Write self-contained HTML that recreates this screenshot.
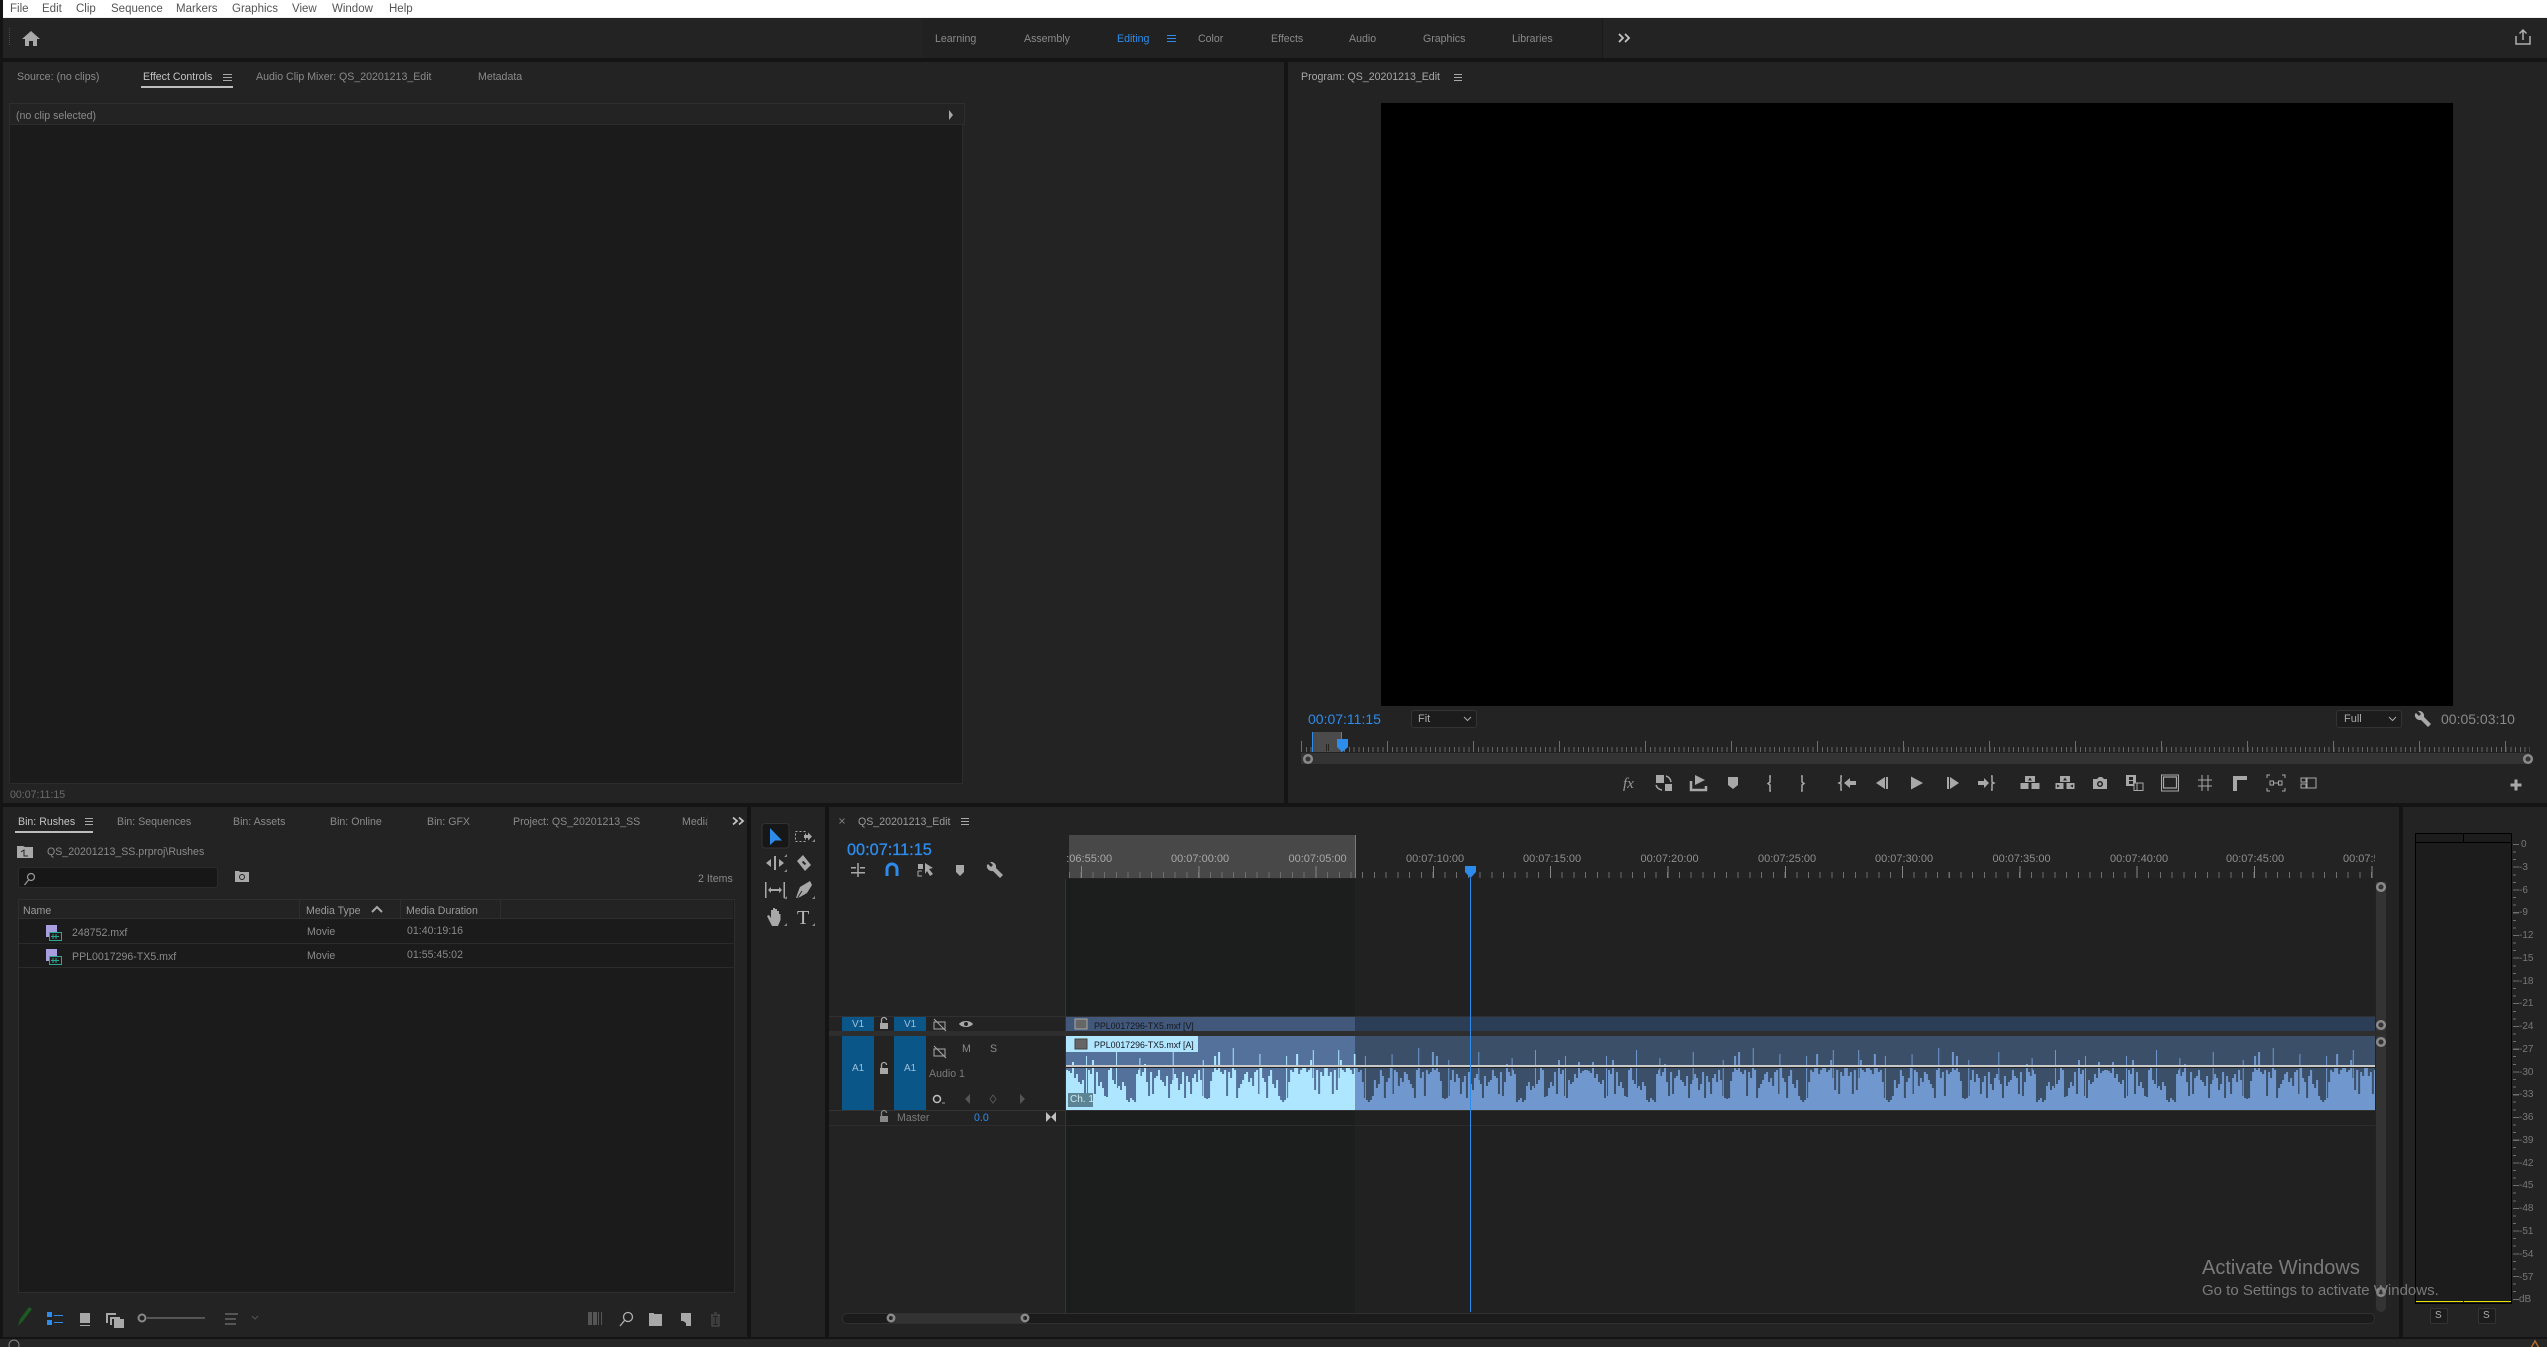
<!DOCTYPE html>
<html><head><meta charset="utf-8"><title>Premiere Pro</title>
<style>
html,body{margin:0;padding:0;width:2547px;height:1347px;overflow:hidden;background:#141414;font-family:"Liberation Sans",sans-serif;font-size:10.6px;color:#8a8a8a}
.b{position:absolute}
.t{position:absolute;white-space:nowrap;line-height:14px;height:14px;margin-top:1px}
.hi{color:#c4c4c4}.blue{color:#2d8ceb}.dim{color:#6a6a6a}
svg{position:absolute;left:0;top:0}
</style></head><body>
<!-- menu -->
<div class="b" style="left:3px;top:0;width:2544px;height:17px;background:#fff;border-bottom:1px solid #eee"></div>
<div class="t" style="left:10px;top:1px;color:#555;font-size:11.5px">File</div>
<div class="t" style="left:42px;top:1px;color:#555;font-size:11.5px">Edit</div>
<div class="t" style="left:76px;top:1px;color:#555;font-size:11.5px">Clip</div>
<div class="t" style="left:111px;top:1px;color:#555;font-size:11.5px">Sequence</div>
<div class="t" style="left:176px;top:1px;color:#555;font-size:11.5px">Markers</div>
<div class="t" style="left:232px;top:1px;color:#555;font-size:11.5px">Graphics</div>
<div class="t" style="left:292px;top:1px;color:#555;font-size:11.5px">View</div>
<div class="t" style="left:332px;top:1px;color:#555;font-size:11.5px">Window</div>
<div class="t" style="left:389px;top:1px;color:#555;font-size:11.5px">Help</div>
<!-- panels -->
<div class="b" style="left:3px;top:18px;width:2544px;height:40px;background:#232323"></div>
<div class="b" style="left:923px;top:18px;width:679px;height:40px;background:#212121"></div>
<div class="b" style="left:1602px;top:18px;width:1px;height:40px;background:#1a1a1a"></div>
<div class="b" style="left:3px;top:62px;width:1281px;height:741px;background:#232323"></div>
<div class="b" style="left:1288px;top:62px;width:1259px;height:741px;background:#232323"></div>
<div class="b" style="left:3px;top:807px;width:744px;height:530px;background:#232323"></div>
<div class="b" style="left:751px;top:807px;width:74px;height:530px;background:#232323"></div>
<div class="b" style="left:829px;top:807px;width:1570px;height:530px;background:#232323"></div>
<div class="b" style="left:2403px;top:807px;width:144px;height:530px;background:#232323"></div>
<div class="b" style="left:0;top:1339px;width:2547px;height:8px;background:#262626"></div>
<!-- workspaces -->
<div class="t" style="left:935px;top:31px">Learning</div>
<div class="t" style="left:1024px;top:31px">Assembly</div>
<div class="t blue" style="left:1117px;top:31px">Editing</div>
<div class="t" style="left:1198px;top:31px">Color</div>
<div class="t" style="left:1271px;top:31px">Effects</div>
<div class="t" style="left:1349px;top:31px">Audio</div>
<div class="t" style="left:1423px;top:31px">Graphics</div>
<div class="t" style="left:1512px;top:31px">Libraries</div>
<!-- source panel -->
<div class="t" style="left:17px;top:69px">Source: (no clips)</div>
<div class="t hi" style="left:143px;top:69px">Effect Controls</div>
<div class="b" style="left:141px;top:86px;width:92px;height:2px;background:#bdbdbd"></div>
<div class="t" style="left:256px;top:69px">Audio Clip Mixer: QS_20201213_Edit</div>
<div class="t" style="left:478px;top:69px">Metadata</div>
<div class="b" style="left:9px;top:103px;width:954px;height:20px;background:#232323;border:1px solid #2e2e2e;border-bottom:1px solid #323232"></div>
<div class="b" style="left:9px;top:124px;width:952px;height:658px;background:#1b1b1b;border:1px solid #2c2c2c"></div>
<div class="t" style="left:16px;top:108px">(no clip selected)</div>
<div class="t dim" style="left:10px;top:787px">00:07:11:15</div>
<!-- program -->
<div class="t" style="left:1301px;top:69px;color:#a8a8a8">Program: QS_20201213_Edit</div>
<div class="b" style="left:1381px;top:103px;width:1072px;height:603px;background:#000"></div>
<div class="t blue" style="left:1308px;top:711px;font-size:14px">00:07:11:15</div>
<div class="b" style="left:1411px;top:710px;width:64px;height:16px;background:#1c1c1c;border:1px solid #333;border-radius:3px"></div>
<div class="t" style="left:1418px;top:711px;color:#aaa;font-size:11px">Fit</div>
<div class="b" style="left:2336px;top:710px;width:64px;height:16px;background:#1c1c1c;border:1px solid #333;border-radius:3px"></div>
<div class="t" style="left:2344px;top:711px;color:#aaa;font-size:11px">Full</div>
<div class="t" style="left:2441px;top:711px;font-size:14px;color:#8a8a8a">00:05:03:10</div>
<div class="b" style="left:1301px;top:747px;width:1229px;height:5px;background:repeating-linear-gradient(90deg,#666 0 1px,transparent 1px 4.78px)"></div>
<div class="b" style="left:1301px;top:741px;width:1229px;height:11px;background:repeating-linear-gradient(90deg,#6e6e6e 0 1px,transparent 1px 86px)"></div>
<div class="b" style="left:1312px;top:732px;width:30px;height:20px;background:#4b4b4b;border-left:1px solid #2d8ceb;border-right:1px solid #2d8ceb;box-sizing:border-box"></div>
<div class="b" style="left:1301px;top:753px;width:1229px;height:11px;background:#333"></div>
<!-- bin -->
<div class="t hi" style="left:18px;top:814px">Bin: Rushes</div>
<div class="b" style="left:15px;top:831px;width:78px;height:2px;background:#bdbdbd"></div>
<div class="t" style="left:117px;top:814px">Bin: Sequences</div>
<div class="t" style="left:233px;top:814px">Bin: Assets</div>
<div class="t" style="left:330px;top:814px">Bin: Online</div>
<div class="t" style="left:427px;top:814px">Bin: GFX</div>
<div class="t" style="left:513px;top:814px">Project: QS_20201213_SS</div>
<div class="t" style="left:682px;top:814px;width:25px;overflow:hidden;border-right:1px solid #2e2e2e">Media Browser</div>
<div class="t" style="left:47px;top:844px">QS_20201213_SS.prproj\Rushes</div>
<div class="b" style="left:18px;top:867px;width:198px;height:19px;background:#171717;border:1px solid #2b2b2b;border-radius:3px"></div>
<div class="t" style="left:698px;top:871px">2 Items</div>
<div class="b" style="left:18px;top:899px;width:715px;height:392px;background:#1b1b1b;border:1px solid #2e2e2e"></div>
<div class="b" style="left:19px;top:900px;width:714px;height:18px;background:#232323;border-bottom:1px solid #2e2e2e;box-sizing:content-box"></div>
<div class="b" style="left:299px;top:900px;width:1px;height:18px;background:#2e2e2e"></div>
<div class="b" style="left:400px;top:900px;width:1px;height:18px;background:#2e2e2e"></div>
<div class="b" style="left:500px;top:900px;width:1px;height:18px;background:#2e2e2e"></div>
<div class="b" style="left:19px;top:943px;width:714px;height:1px;background:#2b2b2b"></div>
<div class="b" style="left:19px;top:967px;width:714px;height:1px;background:#2b2b2b"></div>
<div class="t" style="left:23px;top:903px;color:#9a9a9a">Name</div>
<div class="t" style="left:306px;top:903px;color:#9a9a9a">Media Type</div>
<div class="t" style="left:406px;top:903px;color:#9a9a9a">Media Duration</div>
<div class="t" style="left:72px;top:925px">248752.mxf</div>
<div class="t" style="left:307px;top:924px">Movie</div>
<div class="t" style="left:407px;top:923px">01:40:19:16</div>
<div class="t" style="left:72px;top:949px">PPL0017296-TX5.mxf</div>
<div class="t" style="left:307px;top:948px">Movie</div>
<div class="t" style="left:407px;top:947px">01:55:45:02</div>
<!-- timeline -->
<div class="t" style="left:858px;top:814px;color:#9a9a9a">QS_20201213_Edit</div>
<div class="t blue" style="left:847px;top:841px;font-size:16.3px;height:16px;line-height:16px;-webkit-text-stroke:.3px #2d8ceb">00:07:11:15</div>
<div class="b" style="left:1069px;top:835px;width:286px;height:43px;background:#484848"></div>
<div class="b" style="left:1355px;top:835px;width:1px;height:43px;background:#2d8ceb"></div>
<div class="b" style="left:829px;top:879px;width:1546px;height:434px;background:#212121"></div>
<div class="b" style="left:829px;top:879px;width:236px;height:434px;background:#232323"></div>
<div class="b" style="left:1065px;top:879px;width:1px;height:434px;background:#333"></div>
<div class="b" style="left:1066px;top:879px;width:289px;height:434px;background:#1c1e1d"></div>
<div class="b" style="left:1069px;top:872px;width:1306px;height:6px;background:repeating-linear-gradient(90deg,#6e6e6e 0 1px,transparent 1px 11.73px)"></div>
<div class="b" style="left:1081px;top:866px;width:1294px;height:12px;background:repeating-linear-gradient(90deg,#868686 0 1px,transparent 1px 117.3px)"></div>
<div class="b" style="left:1066px;top:851px;width:1309px;height:15px;overflow:hidden;font-size:11px;color:#8e8e8e">
<span class="t" style="left:-12px;top:0;color:#a8a8a8">00:06:55:00</span>
<span class="t" style="left:105px;top:0;color:#a8a8a8">00:07:00:00</span>
<span class="t" style="left:222.5px;top:0;color:#a8a8a8">00:07:05:00</span>
<span class="t" style="left:340px;top:0">00:07:10:00</span>
<span class="t" style="left:457px;top:0">00:07:15:00</span>
<span class="t" style="left:574.5px;top:0">00:07:20:00</span>
<span class="t" style="left:692px;top:0">00:07:25:00</span>
<span class="t" style="left:809px;top:0">00:07:30:00</span>
<span class="t" style="left:926.5px;top:0">00:07:35:00</span>
<span class="t" style="left:1044px;top:0">00:07:40:00</span>
<span class="t" style="left:1160px;top:0">00:07:45:00</span>
<span class="t" style="left:1277px;top:0">00:07:50:00</span>
</div>
<!-- tracks -->
<div class="b" style="left:829px;top:1016px;width:1546px;height:1px;background:#303030"></div>
<div class="b" style="left:829px;top:1031px;width:1546px;height:5px;background:#2e2e2e"></div>
<div class="b" style="left:829px;top:1110px;width:1546px;height:1px;background:#333"></div>
<div class="b" style="left:829px;top:1125px;width:1546px;height:1px;background:#2c2c2c"></div>
<div class="b" style="left:1065px;top:1017px;width:1px;height:120px;background:#333"></div>
<div class="b" style="left:842px;top:1017px;width:32px;height:14px;background:#0b5688"></div>
<div class="b" style="left:894px;top:1017px;width:32px;height:14px;background:#0b5688"></div>
<div class="b" style="left:842px;top:1036px;width:32px;height:74px;background:#0b5688"></div>
<div class="b" style="left:894px;top:1036px;width:32px;height:74px;background:#0b5688"></div>
<div class="t" style="left:852px;top:1017px;font-size:10px;color:#9fc0d8">V1</div>
<div class="t" style="left:904px;top:1017px;font-size:10px;color:#9fc0d8">V1</div>
<div class="t" style="left:852px;top:1061px;font-size:10px;color:#9fc0d8">A1</div>
<div class="t" style="left:904px;top:1061px;font-size:10px;color:#9fc0d8">A1</div>
<div class="t" style="left:962px;top:1041px">M</div>
<div class="t" style="left:990px;top:1041px">S</div>
<div class="t" style="left:929px;top:1066px;color:#7a7a7a">Audio 1</div>
<div class="t" style="left:897px;top:1110px;color:#7a7a7a">Master</div>
<div class="t blue" style="left:974px;top:1110px">0.0</div>
<!-- clips -->
<div class="b" style="left:1066px;top:1017px;width:289px;height:14px;background:#42587a"></div>
<div class="b" style="left:1355px;top:1017px;width:1020px;height:14px;background:#2c3e56"></div>
<div class="b" style="left:1066px;top:1036px;width:289px;height:74px;background:#53719b"></div>
<div class="b" style="left:1355px;top:1036px;width:1020px;height:74px;background:#3b4f69"></div>
<svg width="1309" height="74" style="left:1066px;top:1036px" viewBox="0 0 1309 74">
<defs>
<g id="w">
<path d="M0 74V34h3V35h3V37h3V26h3V42h3V38h3V46h3V48h3V44h3V62h3V60h3V34h3V38h3V24h3V58h3V36h3V50h3V46h3V52h3V60h3V61h3V34h3V32h3V44h3V48h3V52h3V50h3V54h3V46h3V50h3V64h3V66h3V62h3V64h3V66h3V38h3V34h3V40h3V36h3V28h3V46h3V60h3V36h3V58h3V42h3V40h3V34h3V44h3V46h3V50h3V40h3V62h3V48h3V44h3V38h3V42h3V54h3V48h3V36h3V62h3V40h3V46h3V58h3V42h3V38h3V46h3V34h3V44h3V60h3V62h3V63h3V62h3V45h3V36h3V20h3V34h3V16h3V36h3V38h3V34h3V60h3V36h3V42h3V32h3V34h3V62h3V52h3V48h3V44h3V38h3V36h3V46h3V42h3V50h3V36h3V34h3V58h3V30h3V42h3V46h3V62h3V40h3V34h3V48h3V52h3V44h3V60h3V64h3V66h3V64h3V62h3V46h3V34h3V36h3V30h3V18h3V38h3V34h3V30h3V32h3V36h3V34h3V24h3V42h3V54h3V34h3V58h3V36h3V40h3V32h3V74Z"/>
<path d="M30 74V20h1.500V74ZM75 74V14h1.500V74ZM110 74V22h1.500V74ZM160 74V16h1.500V74ZM205 74V24h1.500V74ZM250 74V12h1.500V74ZM290 74V18h1.500V74ZM330 74V20h1.500V74ZM370 74V14h1.500V74Z"/>
</g>
<clipPath id="c1"><rect x="0" y="0" width="289" height="74"/></clipPath>
<clipPath id="c2"><rect x="289" y="0" width="1020" height="74"/></clipPath>
</defs>
<g clip-path="url(#c1)" fill="#aee6ff"><use href="#w" transform="scale(.667 1)"/><use href="#w" transform="translate(520 0) scale(-.667 1)"/></g>
<g clip-path="url(#c2)" fill="#7098ce">
<use href="#w" transform="translate(520 0) scale(-.667 1)"/><use href="#w" transform="translate(520 0) scale(.667 1)"/><use href="#w" transform="translate(1040 0) scale(-.667 1)"/><use href="#w" transform="translate(1040 0) scale(.667 1)"/><use href="#w" transform="translate(1560 0) scale(-.667 1)"/>
</g>
<rect x="0" y="29" width="1309" height="2" fill="#c8c8c8"/><rect x="0" y="31" width="1309" height="1" fill="#222"/>
</svg>
<div class="b" style="left:1066px;top:1036px;width:132px;height:16px;background:#b0e6ff"></div>
<div class="t" style="left:1094px;top:1018px;color:#14181f;font-size:8.8px">PPL0017296-TX5.mxf [V]</div>
<div class="t" style="left:1094px;top:1037px;color:#14181f;font-size:8.8px">PPL0017296-TX5.mxf [A]</div>
<div class="b" style="left:1068px;top:1093px;width:25px;height:14px;background:#5b8594"></div>
<div class="t" style="left:1070px;top:1092px;color:#cfe8f0;font-size:10px">Ch. 1</div>
<!-- scrollbars -->
<div class="b" style="left:2376px;top:882px;width:10px;height:430px;background:#333;border-radius:0 0 5px 5px"></div>
<div class="b" style="left:2375px;top:1031px;width:11px;height:5px;background:#2e2e2e"></div>
<div class="b" style="left:842px;top:1313px;width:1531px;height:9px;background:#1b1b1b;border:1px solid #303030;border-radius:5px"></div>
<div class="b" style="left:891px;top:1314px;width:134px;height:9px;background:#333"></div>
<!-- meters -->
<div class="b" style="left:2415px;top:833px;width:95px;height:469px;background:#1c1c1c;border:1px solid #000"></div>
<div class="b" style="left:2416px;top:842px;width:95px;height:1px;background:#000"></div>
<div class="b" style="left:2463px;top:834px;width:1px;height:8px;background:#000"></div>
<div class="b" style="left:2416px;top:1301px;width:47px;height:1px;background:#e6e600"></div>
<div class="b" style="left:2464px;top:1301px;width:47px;height:1px;background:#e6e600"></div>
<div class="b" style="left:2513px;top:844px;width:3px;height:456px;background:repeating-linear-gradient(180deg,#6e6e6e 0 1px,transparent 1px 7.58px)"></div>
<div class="b" style="left:2513px;top:844px;width:6px;height:456px;background:repeating-linear-gradient(180deg,#6e6e6e 0 1px,transparent 1px 22.75px)"></div>
<div class="t" style="font-size:10px;color:#777;left:2521px;top:837px">0</div>
<div class="t" style="font-size:10px;color:#777;left:2519px;top:860px">-3</div>
<div class="t" style="font-size:10px;color:#777;left:2519px;top:883px">-6</div>
<div class="t" style="font-size:10px;color:#777;left:2519px;top:905px">-9</div>
<div class="t" style="font-size:10px;color:#777;left:2519px;top:928px">-12</div>
<div class="t" style="font-size:10px;color:#777;left:2519px;top:951px">-15</div>
<div class="t" style="font-size:10px;color:#777;left:2519px;top:974px">-18</div>
<div class="t" style="font-size:10px;color:#777;left:2519px;top:996px">-21</div>
<div class="t" style="font-size:10px;color:#777;left:2519px;top:1019px">-24</div>
<div class="t" style="font-size:10px;color:#777;left:2519px;top:1042px">-27</div>
<div class="t" style="font-size:10px;color:#777;left:2519px;top:1065px">-30</div>
<div class="t" style="font-size:10px;color:#777;left:2519px;top:1087px">-33</div>
<div class="t" style="font-size:10px;color:#777;left:2519px;top:1110px">-36</div>
<div class="t" style="font-size:10px;color:#777;left:2519px;top:1133px">-39</div>
<div class="t" style="font-size:10px;color:#777;left:2519px;top:1156px">-42</div>
<div class="t" style="font-size:10px;color:#777;left:2519px;top:1178px">-45</div>
<div class="t" style="font-size:10px;color:#777;left:2519px;top:1201px">-48</div>
<div class="t" style="font-size:10px;color:#777;left:2519px;top:1224px">-51</div>
<div class="t" style="font-size:10px;color:#777;left:2519px;top:1247px">-54</div>
<div class="t" style="font-size:10px;color:#777;left:2519px;top:1270px">-57</div>
<div class="t" style="font-size:10px;color:#777;left:2519px;top:1292px">dB</div>
<div class="b" style="left:2430px;top:1308px;width:16px;height:14px;border:1px solid #333;border-radius:2px;background:#1c1c1c"></div>
<div class="b" style="left:2478px;top:1308px;width:16px;height:14px;border:1px solid #333;border-radius:2px;background:#1c1c1c"></div>
<div class="t" style="left:2435px;top:1308px;font-size:10px;color:#aaa">S</div>
<div class="t" style="left:2483px;top:1308px;font-size:10px;color:#aaa">S</div>
<!-- icons -->
<svg width="2547" height="1347" viewBox="0 0 2547 1347" fill="#a8a8a8" stroke="none">
<!-- grip, home, share -->
<path d="M9.500 28V46" fill="none" stroke="#4a4a4a" stroke-dasharray="1 1"/>
<path d="M31 31L40 39H37V46H33V41H29V46H25V39H22Z"/>
<path d="M2516 36v8h14v-8M2523 40V30m-3.500 3.500l3.500-3.500 3.500 3.500" fill="none" stroke="#b0b0b0" stroke-width="1.500"/>
<path d="M1619 34l4 4-4 4M1625 34l4 4-4 4" fill="none" stroke="#c4c4c4" stroke-width="1.800"/>
<path d="M733 817.500l4 3.500-4 3.500M739 817.500l4 3.500-4 3.500" fill="none" stroke="#c4c4c4" stroke-width="1.800"/>
<!-- hamburger menus -->
<g fill="none" stroke="#a8a8a8" stroke-width="1">
<path d="M223 74.500h9M223 77.500h9M223 80.500h9"/><path d="M1454 74.500h8M1454 77.500h8M1454 80.500h8"/>
<path d="M85 818.500h8M85 821.500h8M85 824.500h8"/><path d="M961 818.500h8M961 821.500h8M961 824.500h8"/>
<path d="M1167 35.500h9M1167 38.500h9M1167 41.500h9" stroke="#2d8ceb"/>
<path d="M839.500 818.500l5 5m0-5l-5 5" stroke="#777"/>
<path d="M1464 717l3.500 3.500 3.500-3.500M2389 717l3.500 3.500 3.500-3.500"/>
<path d="M372 912l5-5 5 5" stroke-width="2"/>
</g>
<path d="M949 110v10l4-5z"/>
<!-- program scrub -->
<path d="M1337 739h11v8l-5.500 5-5.500-5z" fill="#2d8ceb"/>
<rect x="1326" y="744" width="1" height="7" fill="#222"/><rect x="1328" y="744" width="1" height="7" fill="#222"/>
<g fill="none" stroke="#8a8a8a" stroke-width="2.500">
<circle cx="1308" cy="759" r="3.800"/><circle cx="2528" cy="759" r="3.800"/>
<circle cx="891" cy="1318" r="3.200"/><circle cx="1025" cy="1318" r="3.200"/>
<circle cx="2381" cy="887" r="3.800"/><circle cx="2381" cy="1025" r="3.800"/><circle cx="2381" cy="1042" r="3.800"/><circle cx="2381" cy="1292" r="3.800"/>
</g>
<!-- transport -->
<text x="1623" y="788" font-family="Liberation Serif" font-style="italic" font-size="15" fill="#9a9a9a">fx</text>
<g transform="translate(1664 783)"><rect x="-8" y="-8" width="8" height="8"/><rect x="1" y="1" width="7" height="7"/><path d="M2-7a7 7 0 0 1 5 6M-2 7a7 7 0 0 1-6-5" fill="none" stroke="#a8a8a8" stroke-width="1.500"/></g>
<g transform="translate(1698 783)"><path d="M-7-2V7H8V3" fill="none" stroke="#a8a8a8" stroke-width="2.500"/><path d="M-3-8L7-3L-3 2Z"/></g>
<path transform="translate(1733 783)" d="M-5-6H5V2L0 6L-5 2Z"/>
<path d="M1771 776h-1v6l-2 1.500 2 1.500v6h1M1801 776h1v6l2 1.500-2 1.500v6h-1" fill="none" stroke="#a8a8a8" stroke-width="1.500"/>
<g transform="translate(1848 783)"><path d="M-6-7h-1v6l-2 1 2 1v6h1" fill="none" stroke="#a8a8a8" stroke-width="1.500"/><path d="M-4 0L2-5V-2H8V2H2V5Z"/></g>
<g transform="translate(1882 783)"><path d="M3-6V6L-6 0Z"/><rect x="4" y="-6" width="2" height="12"/></g>
<path transform="translate(1917 783)" d="M-6-6.500V6.500L6 0Z"/>
<g transform="translate(1953 783)"><rect x="-6" y="-6" width="2" height="12"/><path d="M-3-6V6L6 0Z"/></g>
<g transform="translate(1987 783)"><path d="M-9-2H-3V-5L2 0L-3 5V2H-9Z"/><path d="M4-7h1v6l2 1-2 1v6h-1" fill="none" stroke="#a8a8a8" stroke-width="1.500"/></g>
<g transform="translate(2030 783)"><rect x="-9.500" y="0" width="8" height="6"/><rect x="1.500" y="0" width="8" height="6"/><rect x="-5" y="-7" width="10" height="6"/><path d="M0-5.500L2-2.500H-2Z" fill="#232323"/></g>
<g transform="translate(2065 783)"><rect x="-9.500" y="0" width="8" height="6"/><rect x="1.500" y="0" width="8" height="6"/><rect x="-5" y="-7" width="10" height="6"/><path d="M0-5.500L2-2.500H-2ZM-8 1.500L-5 3-8 4.500ZM8 1.500L5 3 8 4.500Z" fill="#232323"/></g>
<g transform="translate(2100 783)"><path d="M-7-4H-3L-1-6H2L4-4H7V6H-7Z"/><circle cx="0" cy="1" r="3" fill="#232323"/><circle cx="0" cy="1" r="1.500"/></g>
<g transform="translate(2135 783)"><rect x="-9" y="-8" width="10" height="11"/><rect x="-6" y="-6" width="4" height="3" fill="#232323"/><rect x="-6" y="-2" width="4" height="3" fill="#232323"/><rect x="-1" y="0" width="9" height="7.500" fill="#232323" stroke="#a8a8a8"/><path d="M2 0V7.500" stroke="#a8a8a8"/></g>
<g transform="translate(2170 783)" fill="none" stroke="#a8a8a8"><rect x="-8.500" y="-8" width="17" height="16" stroke-width="1"/><rect x="-6.500" y="-6" width="13" height="11" stroke-width="1.200"/></g>
<path transform="translate(2205 783)" d="M-3-8V8M3-8V8M-7-3H7M-7 3H7" fill="none" stroke="#a8a8a8"/>
<path transform="translate(2240 783)" d="M-7-7H7V-3H-3V8H-7Z"/>
<g transform="translate(2276 783)" fill="none" stroke="#a8a8a8"><path d="M-6-8H-9V-5M6-8H9V-5M-9 5V8H-6M9 5V8H6"/><rect x="-6" y="-2" width="3.500" height="4"/><rect x="2.500" y="-2" width="3.500" height="4"/><path d="M-2.500 0H2.500"/></g>
<g transform="translate(2310 783)" fill="none" stroke="#a8a8a8"><rect x="-9" y="-5" width="5" height="4"/><rect x="-9" y="1" width="5" height="4"/><rect x="-3" y="-5" width="9" height="10"/></g>
<path transform="translate(2516 785)" d="M-1.500-5.500h3v4h4v3h-4v4h-3v-4h-4v-3h4z"/>
<path transform="translate(2422 719)" d="M-6-6l3 3 2-2-3-3a5 5 0 0 1 6 6l7 7-3 3-7-7a5 5 0 0 1-6-6z"/>
<!-- bin icons -->
<path d="M17 846h6l2 1h8v11H17z"/><path d="M21 852l3-2 0 6h4" fill="none" stroke="#232323"/>
<g fill="none" stroke="#999" stroke-width="1.200"><circle cx="31" cy="877" r="3.500"/><path d="M28.500 880l-4 5"/></g>
<path d="M235 871h4l1 1h9v10h-14z"/><circle cx="242" cy="877" r="2.500" fill="none" stroke="#232323"/>
<g><rect x="46" y="925" width="11" height="12" fill="#a99fe0"/><rect x="49.500" y="932.500" width="12" height="8" fill="#1b1b1b" stroke="#2aa890"/><path d="M51 936.500h8M53 934v5M56 934v5" stroke="#2aa890"/>
<rect x="46" y="949" width="11" height="12" fill="#a99fe0"/><rect x="49.500" y="956.500" width="12" height="8" fill="#1b1b1b" stroke="#2aa890"/><path d="M51 960.500h8M53 958v5M56 958v5" stroke="#2aa890"/></g>
<!-- tools -->
<rect x="762" y="823.500" width="27" height="24.500" rx="3" fill="#171717" stroke="#333"/>
<path d="M770 828V845L775 840.500L782 840.500Z" fill="#2d8ceb"/>
<rect x="795.500" y="831.500" width="10" height="10" fill="none" stroke="#a8a8a8" stroke-dasharray="2 2"/><path d="M804 835h4v-2.500l4 4-4 4v-2.500h-4z"/>
<g transform="translate(775 863)"><path d="M-1-7h2V7h-2zM-9 0l5-4v8zM9 0l-5-4v8z"/></g>
<g transform="translate(804 863)"><path d="M-7-2L-1-8L7 2L1 8Z"/><rect x="-2" y="-1" width="4" height="2" fill="#232323" transform="rotate(45)"/></g>
<g transform="translate(775 890)"><rect x="-10" y="-8" width="1.500" height="16"/><rect x="8.500" y="-8" width="1.500" height="16"/><path d="M-7 0l3-3v2h8v-2l3 3-3 3v-2h-8v2z"/></g>
<g transform="translate(803 890)"><path d="M7-9L9-5 4 3-3 7-7 8-5 2-3-3Z"/><path d="M-5 7L-1 1" stroke="#232323"/></g>
<g transform="translate(775 917)"><path d="M-8-1L-6-2-4 1V-7H-2V-1-9H0V-1-8H2V-1-6H4V-1-3H5.500V3L3 9H-3Z"/></g>
<text x="797" y="924" font-family="Liberation Serif" font-size="20" fill="#b8b8b8">T</text>
<path d="M787 857v-3l-3 3zM815 842v-3l-3 3zM787 872v-3l-3 3zM787 899v-3l-3 3zM815 899v-3l-3 3zM787 926v-3l-3 3zM815 926v-3l-3 3z" fill="#888"/>
<!-- timeline icons -->
<g transform="translate(858 870)"><rect x="-.75" y="-7" width="1.500" height="14"/><rect x="-7" y="-3" width="5" height="1.500"/><rect x="2" y="-3" width="5" height="1.500"/><rect x="-7" y="2" width="14" height="1.500"/></g>
<path transform="translate(892 870)" d="M-5 6V-1A5 5 0 0 1 5-1V6" fill="none" stroke="#2d8ceb" stroke-width="3"/>
<g transform="translate(926 870)"><rect x="-8" y="-6" width="5" height="5"/><path d="M-8 1h4M-8 1v5h4" fill="none" stroke="#a8a8a8"/><path d="M-1-7L7-2L3-1L7 4L4 6L1 1L-1 4Z"/></g>
<path transform="translate(960 870)" d="M-4-5H4V2L0 6L-4 2Z"/>
<path transform="translate(994 870)" d="M-6-6l3 3 2-2-3-3a5 5 0 0 1 6 6l7 7-3 3-7-7a5 5 0 0 1-6-6z"/>
<!-- playhead -->
<path d="M1465 866h11v6l-5.500 6-5.500-6z" fill="#2d8ceb"/>
<rect x="1470" y="878" width="1" height="434" fill="#2d8ceb"/>
<!-- track header icons -->
<g fill="#a8a8a8"><rect x="880" y="1023" width="8" height="6"/><rect x="880" y="1068" width="8" height="6"/><rect x="880" y="1116" width="8" height="6" fill="#888"/></g>
<g fill="none" stroke="#a8a8a8" stroke-width="1.300"><path d="M881.500 1023v-3a2.500 2.500 0 0 1 5 0"/><path d="M881.500 1068v-3a2.500 2.500 0 0 1 5 0"/><path d="M881.500 1116v-3a2.500 2.500 0 0 1 5 0" stroke="#888"/></g>
<g fill="none" stroke="#a8a8a8"><path d="M934 1022h11v7h-11zM934 1019l12 12" /><path d="M934 1049h11v7h-11zM934 1046l12 12"/></g>
<path d="M959 1024c3-4 11-4 14 0c-3 4-11 4-14 0z"/><circle cx="966" cy="1024" r="2" fill="#232323"/>
<rect x="1075" y="1019" width="12" height="10" fill="#666" stroke="#aaa"/><rect x="1075" y="1039" width="12" height="10" fill="#666" stroke="#444"/>
<circle cx="937" cy="1099" r="3.500" fill="none" stroke="#c0c0c0" stroke-width="1.500"/><path d="M942 1103h3" stroke="#999"/>
<path d="M970 1094v10l-5-5zM1020 1094v10l5-5z" fill="#555"/><path d="M993 1095l3 4-3 4-3-4z" fill="none" stroke="#555"/>
<path d="M1046 1112l5 5-5 5zM1056 1112l-5 5 5 5z" fill="#c0c0c0"/>
<!-- bottom bin icons -->
<path d="M18 1326l2-7 9-12 3 2-9 12z" fill="#1d5a22"/>
<rect x="47" y="1312" width="5" height="5" fill="#2d8ceb"/><rect x="47" y="1320" width="5" height="5" fill="#2d8ceb"/><path d="M54 1315.500h9M54 1322.500h9" stroke="#2d8ceb"/>
<rect x="80" y="1313" width="10" height="10"/><rect x="80" y="1325" width="10" height="1"/>
<path d="M106 1313h10v2h-8v8h-2z"/><path d="M110 1317h10v2h-8v6h-2z"/><rect x="114" y="1319" width="10" height="9"/>
<circle cx="142" cy="1318" r="3.500" fill="none" stroke="#888" stroke-width="2"/><rect x="147" y="1317" width="58" height="2" fill="#555"/>
<path d="M225 1313h13v2h-13zM225 1318h11v2h-11zM225 1323h11v2h-11z" fill="#555"/>
<path d="M252 1316l3 3 3-3" fill="none" stroke="#555"/>
<path d="M588 1312h4v13h-4zM593 1312h4v13h-4zM598 1312h1v13h-1zM601 1312h1v13h-1z" fill="#555"/>
<g fill="none" stroke="#b0b0b0" stroke-width="1.300"><circle cx="628" cy="1317" r="4.500"/><path d="M624.500 1320.500l-4.500 5.500"/></g>
<path d="M649 1313h5v1h8v12h-13z"/>
<path d="M681 1313h10v13h-5v-3l-3-2h-2z"/>
<g fill="none" stroke="#555"><path d="M711 1315h9M712 1315v11h7v-11M714 1313h3M714 1317v7M717 1317v7"/></g>
<!-- status -->
<circle cx="14" cy="1345" r="5" fill="none" stroke="#888"/>
<path d="M2535 1341l4 7h-8z" fill="none" stroke="#b06a30" stroke-width="1.500"/>
</svg>
<!-- activation -->
<div class="t" style="left:2202px;top:1255px;font-size:20px;height:24px;line-height:24px;color:#7a7a7a">Activate Windows</div>
<div class="t" style="left:2202px;top:1281px;font-size:15px;height:18px;line-height:18px;color:#7a7a7a">Go to Settings to activate Windows.</div>
</body></html>
